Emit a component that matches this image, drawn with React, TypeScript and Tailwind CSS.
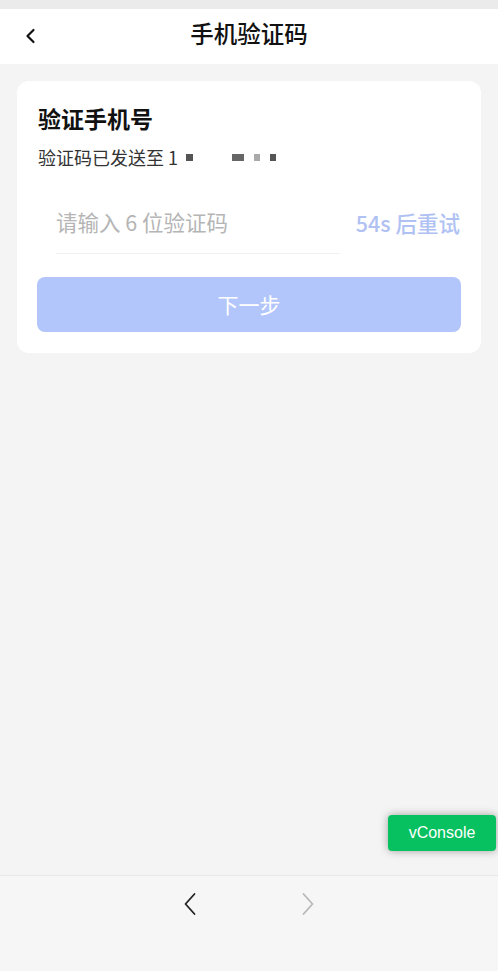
import React from "react";

const font = { fontFamily: '"Noto Sans CJK SC", "Noto Sans", sans-serif' };

export default function App() {
  return (
    <div className="relative w-[498px] h-[971px] bg-[#f4f4f4] flex flex-col overflow-hidden" style={font}>
      <div className="h-[9px] bg-[#ebebeb]" />
      <div className="h-[55px] bg-white flex items-center relative pb-[6px]">
        <div className="absolute left-[24px] top-[18px]">
          <svg width="14" height="18" viewBox="0 0 14 18" fill="none">
            <path d="M9.5 3 L3.5 9 L9.5 15" stroke="#111" strokeWidth="2.2" strokeLinecap="round" strokeLinejoin="round" />
          </svg>
        </div>
        <div className="flex-1 text-center text-[23.5px] font-medium text-[#111] leading-none">手机验证码</div>
      </div>

      <div className="px-[17px] pt-[17px]">
        <div className="bg-white rounded-[12px] px-[20px] pt-[22px] pb-[21px]">
          <div className="px-[1px] text-[23px] font-bold text-[#111] leading-[30px]">验证手机号</div>
          <div className="px-[1px] mt-[12px] flex items-center text-[18px] text-[#333] leading-[24px]">
            <span>验证码已发送至 1</span>
            <span className="ml-[8px] w-[7px] h-[7px] bg-[#555]" />
            <span className="ml-[39px] w-[12px] h-[7px] bg-[#666]" />
            <span className="ml-[10px] w-[6px] h-[7px] bg-[#aaa]" />
            <span className="ml-[10px] w-[6px] h-[7px] bg-[#555]" />
          </div>
          <div className="mt-[27px] flex items-center">
            <div className="ml-[19px] w-[284px] h-[58px] border-b border-[#f0f0f0] flex items-center pb-[4px]">
              <span className="text-[21.5px] text-[#b5b5b5]">请输入 6 位验证码</span>
            </div>
            <div className="flex-1 text-right pb-[4px] pr-[1px] text-[21.5px] font-medium text-[#b0c2f3] whitespace-nowrap">54s 后重试</div>
          </div>
          <div className="mt-[23px] h-[55px] rounded-[8px] bg-[#b3c6fb] flex items-center justify-center text-white text-[21px]">
            下一步
          </div>
        </div>
      </div>

      <div className="flex-1" />

      <div className="h-[96px] border-t border-[#e8e8e8] bg-[#f6f6f6] flex justify-center pt-[16px]">
        <div className="flex gap-[104px]">
          <svg width="14" height="24" viewBox="0 0 14 24" fill="none">
            <path d="M11.5 2 L2.5 12 L11.5 22" stroke="#222" strokeWidth="1.8" strokeLinecap="round" strokeLinejoin="round" />
          </svg>
          <svg width="14" height="24" viewBox="0 0 14 24" fill="none">
            <path d="M2.5 2 L11.5 12 L2.5 22" stroke="#b8b8b8" strokeWidth="1.8" strokeLinecap="round" strokeLinejoin="round" />
          </svg>
        </div>
      </div>

      <div
        className="absolute left-[388px] top-[815px] w-[108px] h-[36px] rounded-[4px] bg-[#07c160] flex items-center justify-center text-white text-[16px] shadow-[0_0_8px_rgba(0,0,0,0.35)]"
        style={{ fontFamily: '"Liberation Sans", Arial, sans-serif' }}
      >
        vConsole
      </div>
    </div>
  );
}
